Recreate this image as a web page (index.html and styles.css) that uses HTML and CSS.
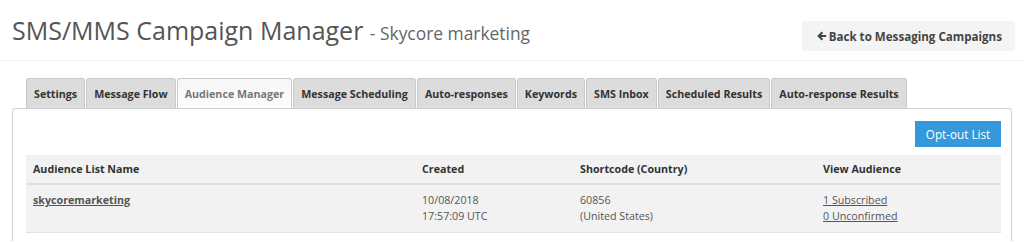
FILE: index.html
```html
<!DOCTYPE html>
<html lang="en">
<head>
    <meta charset="UTF-8">
    <title>SMS/MMS Campaign Manager</title>
    <link rel="stylesheet" href="styles.css">
</head>
<body>
    <div class="page-header">
        <h1>SMS/MMS Campaign Manager <small>- Skycore marketing</small></h1>
        <a class="back-button" href="#">
            <svg class="arrow" viewBox="0 0 12 12" width="10" height="10">
                <path d="M6.5 1.5 L2 6 L6.5 10.5 M2.5 6 H11" fill="none" stroke="#444" stroke-width="2.4"/>
            </svg>Back to Messaging Campaigns
        </a>
    </div>

    <div class="tabs">
        <span class="tab">Settings</span>
        <span class="tab">Message Flow</span>
        <span class="tab active">Audience Manager</span>
        <span class="tab">Message Scheduling</span>
        <span class="tab">Auto-responses</span>
        <span class="tab">Keywords</span>
        <span class="tab">SMS Inbox</span>
        <span class="tab">Scheduled Results</span>
        <span class="tab">Auto-response Results</span>
    </div>

    <div class="panel">
        <div class="toolbar">
            <a class="btn-primary" href="#">Opt-out List</a>
        </div>
        <table class="audience">
            <thead>
                <tr>
                    <th class="col-name">Audience List Name</th>
                    <th class="col-created">Created</th>
                    <th class="col-code">Shortcode (Country)</th>
                    <th>View Audience</th>
                </tr>
            </thead>
            <tbody>
                <tr>
                    <td><a class="strong-link" href="#">skycoremarketing</a></td>
                    <td>10/08/2018<br>17:57:09 UTC</td>
                    <td>60856<br>(United States)</td>
                    <td><a href="#">1 Subscribed</a><br><a href="#">0 Unconfirmed</a></td>
                </tr>
            </tbody>
        </table>
    </div>
</body>
</html>
```

FILE: styles.css
```css
body {
    margin: 0;
    font-family: "Open Sans", "Liberation Sans", sans-serif;
    color: #555;
    background-color: #fff;
}

.page-header {
    display: flex;
    justify-content: space-between;
    align-items: flex-start;
    height: 40px;
    padding: 10px 9px 10px 12px;
    border-bottom: 1px solid #f3f3f3;
}

.page-header h1 {
    margin: 0;
    font-size: 25px;
    font-weight: normal;
    line-height: 40px;
    color: #555;
}

.page-header h1 small {
    font-size: 17.4px;
    line-height: 1;
    color: #666;
}

.back-button {
    display: flex;
    align-items: center;
    margin-top: 11px;
    height: 30px;
    padding: 0 13px 0 15px;
    background-color: #f4f4f4;
    border-radius: 3px;
    font-size: 11.6px;
    font-weight: bold;
    color: #444;
    text-decoration: none;
}

.arrow {
    margin-right: 2px;
}

.tabs {
    display: flex;
    gap: 1px;
    margin: 17px 0 0 26px;
}

.tab {
    padding: 0 7px;
    height: 29px;
    line-height: 30px;
    font-size: 10.7px;
    font-weight: bold;
    color: #333;
    background-color: #dcdcdc;
    border: 1px solid #c9c9c9;
    border-bottom: none;
    border-radius: 3px 3px 0 0;
}

.tab.active {
    color: #777;
    background: linear-gradient(#f6f6f6, #fdfdfd);
}

.panel {
    margin: 0 12px;
    padding: 12px 10px 0 13px;
    border: 1px solid #cfcfcf;
    border-bottom: none;
    border-radius: 4px 4px 0 0;
    height: 120px;
}

.toolbar {
    display: flex;
    justify-content: flex-end;
    margin-bottom: 8px;
}

.btn-primary {
    display: block;
    width: 86px;
    height: 26px;
    line-height: 26px;
    text-align: center;
    font-size: 11.7px;
    color: #fff;
    background-color: #3498db;
    text-decoration: none;
}

.audience {
    width: 100%;
    border-collapse: collapse;
    font-size: 10.7px;
}

.audience th {
    text-align: left;
    font-weight: bold;
    color: #333;
    background-color: #f2f2f2;
    height: 28px;
    padding: 0 7px;
    border-bottom: 2px solid #dedede;
}

.audience td {
    vertical-align: top;
    background-color: #f2f2f2;
    padding: 7px 7px 8px;
    line-height: 16px;
    color: #555;
    border-bottom: 1px solid #e2e2e2;
}

.col-name {
    width: 375px;
}

.col-created {
    width: 144px;
}

.col-code {
    width: 229px;
}

.audience a {
    color: #555;
    text-decoration: underline;
}

.audience a.strong-link {
    font-weight: bold;
}
```
